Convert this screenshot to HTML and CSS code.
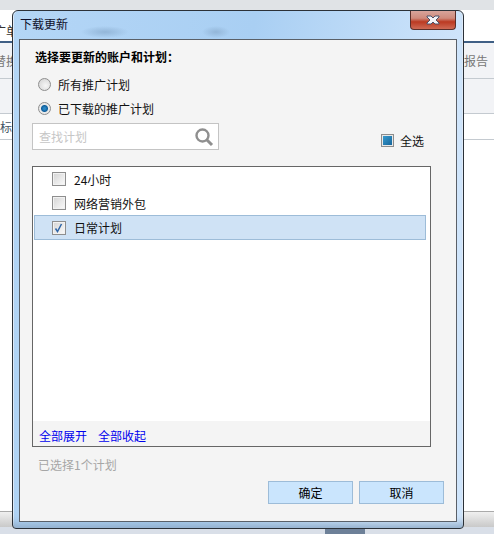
FILE: index.html
```html
<!DOCTYPE html>
<html lang="zh-CN">
<head>
    <meta charset="UTF-8">
    <meta name="viewport" content="width=device-width, initial-scale=1.0">
    <title>下载更新</title>
    <link rel="stylesheet" href="styles.css">
</head>
<body>
    <!-- 后面的主窗口，只露出边缘 -->
    <div class="app">
        <div class="app-top"></div>
        <div class="app-tabs"><span class="tab-left">广单</span></div>
        <div class="app-row app-toolbar">
            <span>替换</span>
            <span>报告</span>
        </div>
        <div class="app-row app-blank"></div>
        <div class="app-row app-head"><span>标</span></div>
        <div class="app-main"></div>
        <div class="app-scroll"></div>
        <div class="app-status"><div class="grip"></div></div>
    </div>

    <div class="dialog">
        <div class="titlebar">
            <span class="title">下载更新</span>
            <div class="close">
                <svg width="16" height="10" viewBox="0 0 16 10">
                    <path d="M2 1h4l2 2 2-2h4v1l-3 3 3 3v1h-4l-2-2-2 2H2V8l3-3-3-3z" fill="#f4f4f8" stroke="#4a5068" stroke-width="1"/>
                </svg>
            </div>
        </div>
        <div class="client">
            <h1 class="heading">选择要更新的账户和计划：</h1>

            <label class="radio-row"><span class="radio"></span>所有推广计划</label>
            <label class="radio-row"><span class="radio radio-on"></span>已下载的推广计划</label>

            <div class="filter-row">
                <div class="search">
                    <span>查找计划</span>
                    <svg width="20" height="20" viewBox="0 0 20 20">
                        <circle cx="8.5" cy="8.5" r="6" fill="none" stroke="#8f8f8f" stroke-width="2.4"/>
                        <path d="M13 13l5 5" stroke="#8f8f8f" stroke-width="3"/>
                    </svg>
                </div>
                <label class="select-all"><span class="box-on"></span>全选</label>
            </div>

            <div class="list">
                <ul class="plans">
                    <li class="plan"><span class="check"></span>24小时</li>
                    <li class="plan"><span class="check"></span>网络营销外包</li>
                    <li class="plan plan-selected">
                        <span class="check">
                            <svg width="12" height="12" viewBox="0 0 12 12">
                                <path d="M2.5 6.5l2 3 4-7.5" fill="none" stroke="#2f66a8" stroke-width="1.5"/>
                            </svg>
                        </span>日常计划
                    </li>
                </ul>
                <div class="list-foot">
                    <a href="#">全部展开</a>
                    <a href="#">全部收起</a>
                </div>
            </div>

            <div class="count">已选择1个计划</div>

            <div class="buttons">
                <button class="btn">确定</button>
                <button class="btn">取消</button>
            </div>
        </div>
    </div>
</body>
</html>
```

FILE: styles.css
```css
* {
    box-sizing: border-box;
}

body {
    margin: 0;
    width: 494px;
    height: 534px;
    overflow: hidden;
    font-family: "Noto Sans CJK SC", "Liberation Sans", sans-serif;
    font-size: 12px;
    color: #111;
    background: #fff;
}

/* 主窗口 */
.app {
    height: 534px;
    display: flex;
    flex-direction: column;
    color: #777;
}

.app-top {
    height: 10px;
    background: #e0e3e6;
}

.app-tabs {
    height: 33px;
    padding-top: 12px;
    border-bottom: 2px solid #3f5f85;
    overflow: hidden;
}

.tab-left {
    margin-left: -6px;
    color: #333;
}

.app-row {
    display: flex;
    justify-content: space-between;
    align-items: center;
    background: #f2f3f6;
    border-bottom: 1px solid #c4cad0;
}

.app-toolbar {
    height: 36px;
    font-size: 12px;
    padding: 0 6px 0 0;
}

.app-toolbar span:first-child {
    margin-left: -6px;
}

.app-blank {
    height: 35px;
}

.app-head {
    height: 26px;
    color: #456;
    background: #fff;
}

.app-main {
    flex: 1;
}

.app-scroll {
    height: 16px;
    background: linear-gradient(#f0f0f0, #c9c9c9);
    border-top: 1px solid #aaa;
}

.app-status {
    height: 7px;
    background: #d9dfe8;
    display: flex;
    justify-content: flex-end;
    padding-right: 129px;
}

.grip {
    width: 40px;
    height: 5px;
    margin-top: 2px;
    background: #6d8098;
}

/* 对话框 */
.dialog {
    position: absolute;
    left: 12px;
    top: 10px;
    width: 452px;
    height: 519px;
    padding: 0 6px 6px 6px;
    display: flex;
    flex-direction: column;
    border: 1px solid #2b3138;
    border-radius: 6px 6px 4px 4px;
    background:
        radial-gradient(ellipse 24px 6px at 92px 21px, #93b6d8, transparent),
        radial-gradient(ellipse 14px 6px at 203px 21px, #93b6d8, transparent),
        linear-gradient(100deg, #b4d6f6, #a9cff3 45%, #d0e5fb 85%);
    box-shadow: inset 0 -10px 8px -6px #90acc9, inset 1px 0 0 #e3effb, inset -1px 0 0 #e3effb;
}

.titlebar {
    height: 28px;
    flex: none;
    position: relative;
    display: flex;
    align-items: center;
}

.title {
    margin-left: 1px;
    color: #10102a;
    position: relative;
    top: -2px;
}

.close {
    position: absolute;
    right: 1px;
    top: 0;
    width: 46px;
    height: 19px;
    display: flex;
    align-items: center;
    justify-content: center;
    border: 1px solid #5a2f2a;
    border-top: none;
    border-radius: 0 0 4px 4px;
    background: linear-gradient(#d8a49b, #cf8a7c 40%, #bb3a22 60%, #cf6a55);
}

.client {
    flex: 1;
    padding: 9px 12px 17px 12px;
    display: flex;
    flex-direction: column;
    background: #f4f4f4;
    border: 1px solid #5a6068;
}

.heading {
    margin: 0 0 7px 3px;
    font-size: 12px;
    line-height: 16px;
    font-weight: bold;
    color: #000;
}

.radio-row {
    height: 24px;
    display: flex;
    align-items: center;
    gap: 7px;
    margin-left: 6px;
}

.radio {
    width: 13px;
    height: 13px;
    border-radius: 50%;
    border: 1px solid #8e8e8e;
    background: radial-gradient(circle at 60% 60%, #f6f6f6, #d0d0d0);
}

.radio-on {
    background: radial-gradient(circle, #2a86c4 0 1px, #0f5f9c 3px, #e9e9e9 4px);
}

.filter-row {
    display: flex;
    justify-content: space-between;
    align-items: flex-end;
    height: 27px;
    margin-top: 3px;
}

.search {
    width: 187px;
    height: 27px;
    display: flex;
    align-items: center;
    justify-content: space-between;
    padding: 0 4px 0 6px;
    background: #fff;
    border: 1px solid #c4c4c4;
    color: #c6c6c6;
}

.select-all {
    display: flex;
    align-items: center;
    gap: 6px;
    margin: 0 20px 1px 0;
}

.box-on {
    width: 13px;
    height: 13px;
    border: 1px solid #8c8c8c;
    box-shadow: inset 0 0 0 1px #e8e8e8;
    background: linear-gradient(135deg, #3aa0d4, #145f94);
}

.list {
    width: 399px;
    height: 281px;
    margin-top: 16px;
    display: flex;
    flex-direction: column;
    justify-content: space-between;
    background: #fff;
    border: 1px solid #666;
}

.plans {
    list-style: none;
    margin: 0;
    padding: 0 4px 0 1px;
}

.plan {
    height: 24px;
    display: flex;
    align-items: center;
    gap: 8px;
    padding-left: 18px;
}

.plan-selected {
    background: #cfe2f5;
    border: 1px solid #9dbcd8;
    padding-left: 17px;
    height: 25px;
}

.check {
    width: 14px;
    height: 14px;
    flex: none;
    display: flex;
    border: 1px solid #8e8e8e;
    box-shadow: inset 0 0 0 1px #f2f2f2;
    background: linear-gradient(135deg, #d4d4d4, #fbfbfb);
}

.list-foot {
    height: 25px;
    display: flex;
    align-items: center;
    gap: 11px;
    padding: 3px 0 0 6px;
    background: #f4f4f4;
}

.list-foot a {
    color: #0000ee;
    text-decoration: none;
}

.count {
    margin: 10px 0 0 6px;
    line-height: 16px;
    color: #a6a6a6;
}

.buttons {
    display: flex;
    justify-content: flex-end;
    gap: 6px;
    margin: 8px 0 0 0;
}

.btn {
    width: 85px;
    height: 23px;
    padding: 0;
    font: inherit;
    color: #000;
    background: #cae5fd;
    border: 1px solid #9dbcd8;
}
```
